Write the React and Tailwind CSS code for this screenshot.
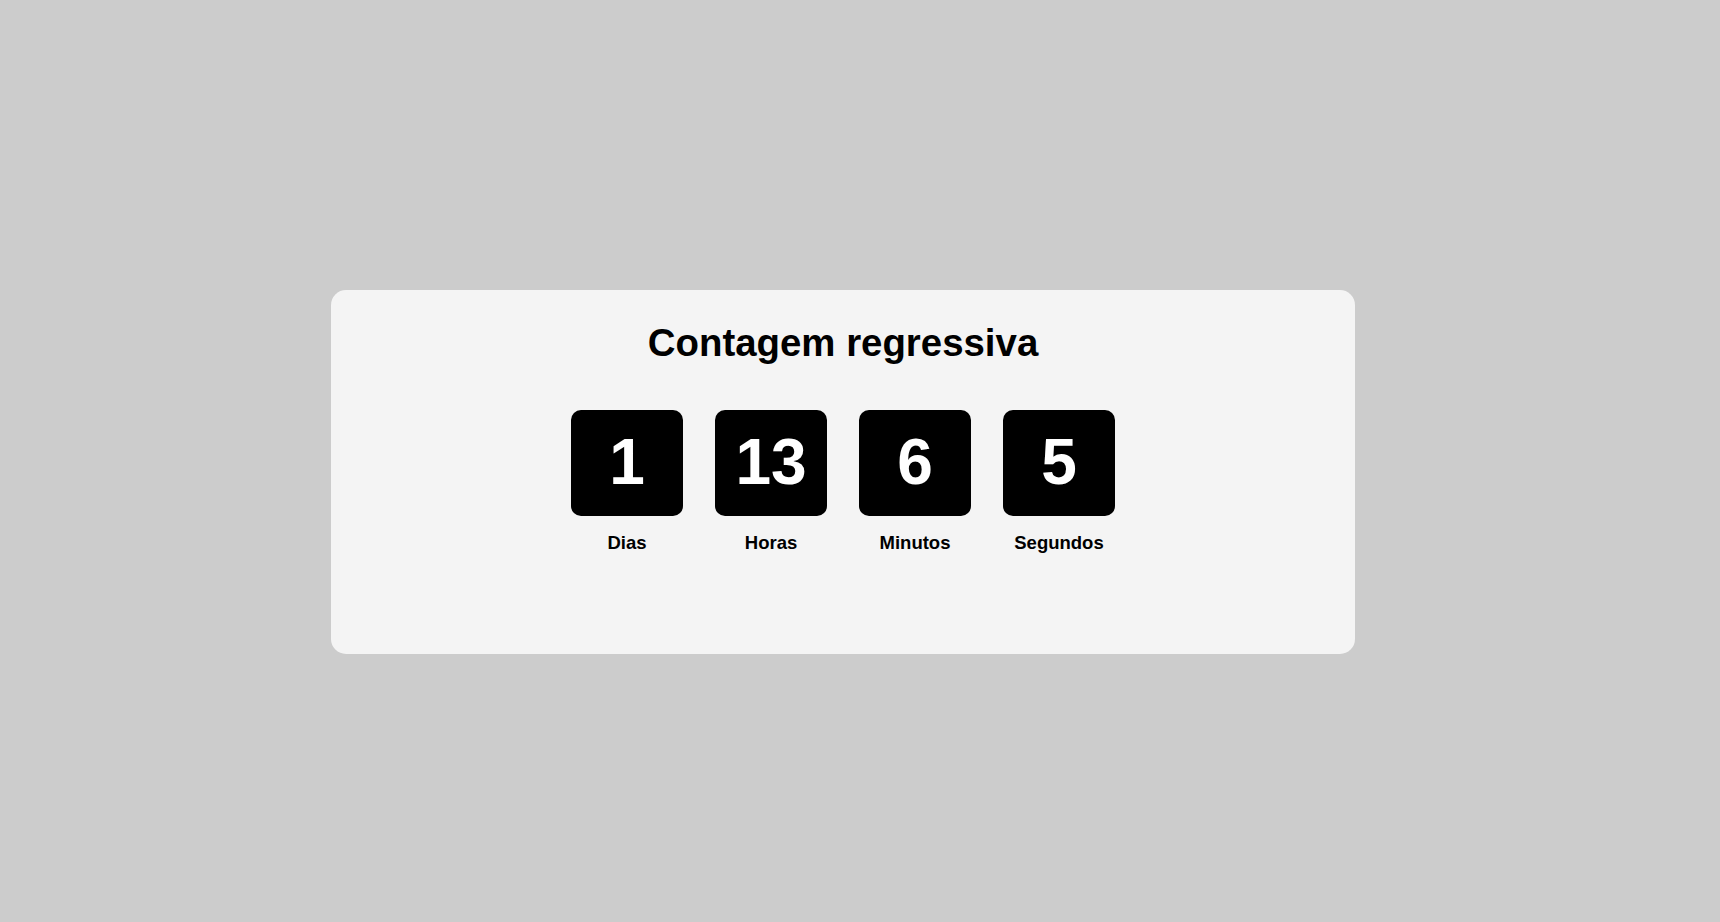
export default function App() {
  const items = [
    { v: "1", l: "Dias" },
    { v: "13", l: "Horas" },
    { v: "6", l: "Minutos" },
    { v: "5", l: "Segundos" },
  ];
  return (
    <div className="min-h-[922px] w-full bg-[#cccccc] pt-[290px] pl-[331px]" style={{ fontFamily: '"Liberation Sans", Arial, sans-serif' }}>
      <div className="flex h-[364px] w-[1024px] flex-col items-center rounded-[15px] bg-[#f4f4f4] pt-[31px]">
        <h1 className="text-[38.4px] font-bold leading-[1.15] text-black">Contagem regressiva</h1>
        <div className="mt-[45px] flex gap-[32px]">
          {items.map((it) => (
            <div key={it.l} className="flex flex-col items-center">
              <div className="flex min-w-[112px] items-center justify-center rounded-[10px] bg-black p-4 text-[64px] font-bold leading-[1.15] text-white">
                {it.v}
              </div>
              <div className="mt-4 text-[18.5px] font-bold leading-[1.15] text-black">{it.l}</div>
            </div>
          ))}
        </div>
      </div>
    </div>
  );
}
